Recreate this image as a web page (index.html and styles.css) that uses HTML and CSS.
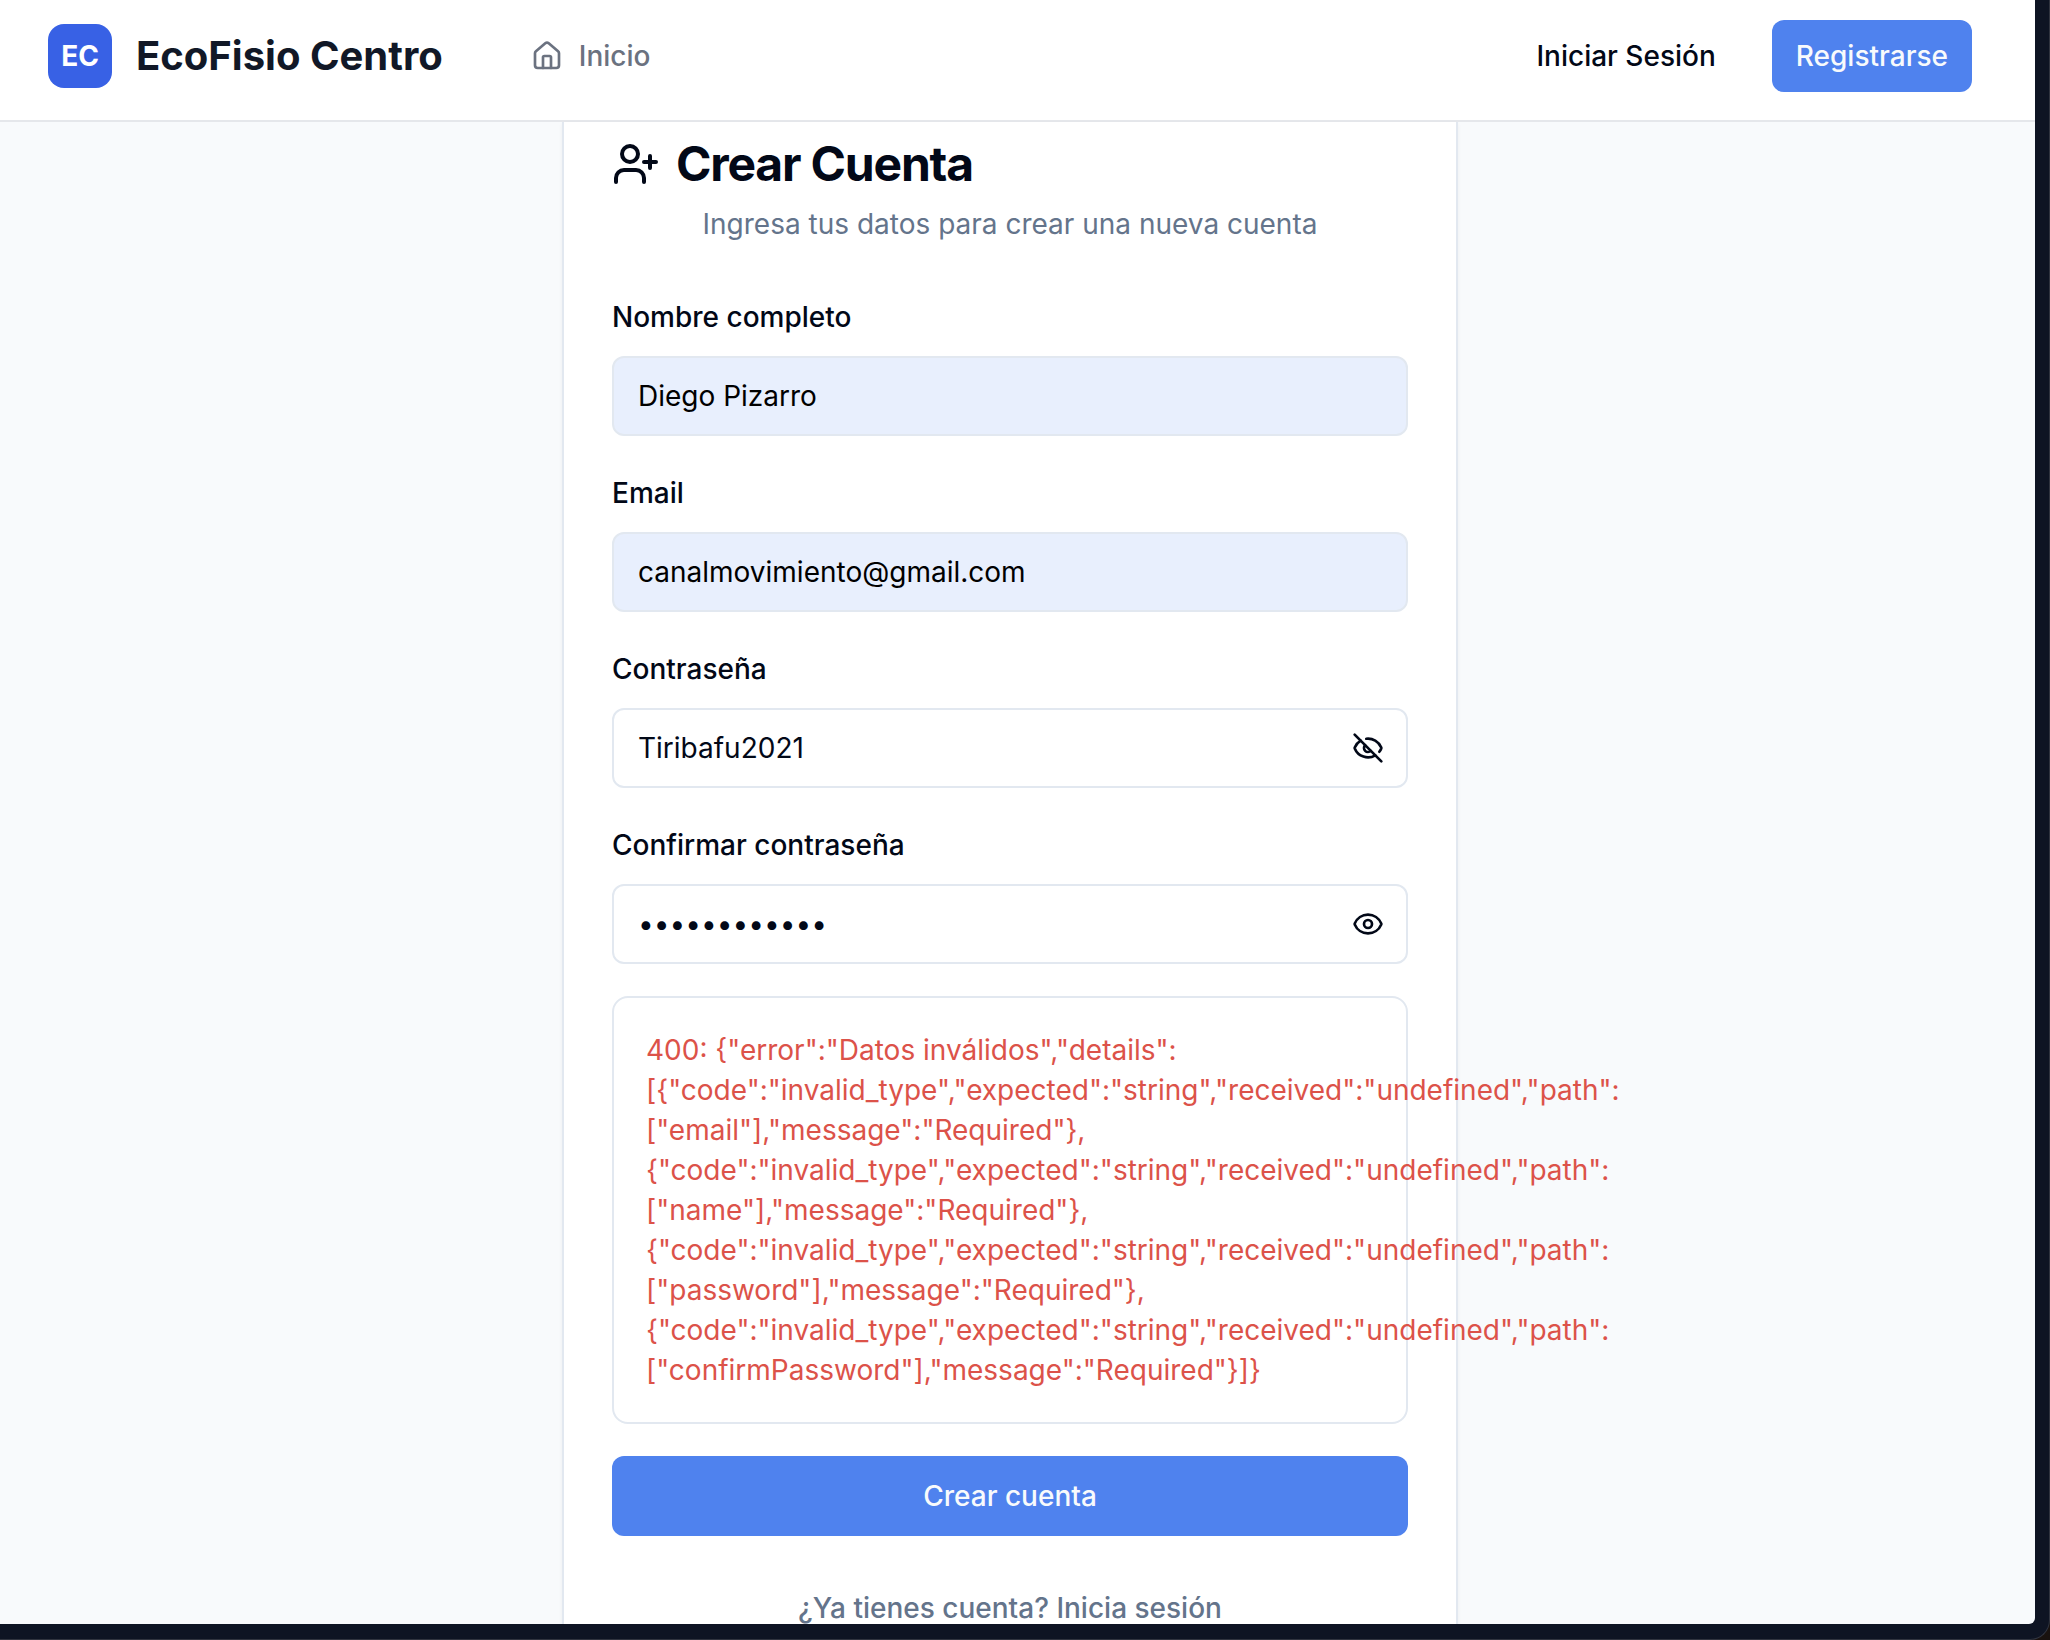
FILE: index.html
```html
<!DOCTYPE html>
<html lang="es">
<head>
<meta charset="utf-8">
<title>EcoFisio Centro</title>
<link rel="stylesheet" href="styles.css">
</head>
<body>
<div class="window">
<div class="screen">
  <header class="header">
    <div class="logo">EC</div>
    <span class="brand">EcoFisio Centro</span>
    <nav class="nav">
      <a class="nav-link">
        <svg class="icon" viewBox="0 0 24 24"><path d="M15 21v-8a1 1 0 0 0-1-1h-4a1 1 0 0 0-1 1v8"/><path d="M3 10a2 2 0 0 1 .709-1.528l7-5.999a2 2 0 0 1 2.582 0l7 5.999A2 2 0 0 1 21 10v9a2 2 0 0 1-2 2H5a2 2 0 0 1-2-2z"/></svg>
        <span>Inicio</span>
      </a>
    </nav>
    <a class="login">Iniciar Sesión</a>
    <button class="btn register">Registrarse</button>
  </header>
  <main class="main">
    <section class="card">
      <h1 class="title">
        <svg class="icon icon-lg" viewBox="0 0 24 24"><path d="M16 21v-2a4 4 0 0 0-4-4H6a4 4 0 0 0-4 4v2"/><circle cx="9" cy="7" r="4"/><path d="M19 8v6M22 11h-6"/></svg>
        <span>Crear Cuenta</span>
      </h1>
      <p class="subtitle">Ingresa tus datos para crear una nueva cuenta</p>
      <form class="form">
        <div class="field">
          <label class="label" for="name">Nombre completo</label>
          <div class="control filled"><input class="input" id="name" type="text" value="Diego Pizarro"></div>
        </div>
        <div class="field">
          <label class="label" for="email">Email</label>
          <div class="control filled"><input class="input" id="email" type="text" value="canalmovimiento@gmail.com"></div>
        </div>
        <div class="field">
          <label class="label" for="password">Contraseña</label>
          <div class="control">
            <input class="input" id="password" type="text" value="Tiribafu2021">
            <svg class="icon" viewBox="0 0 24 24"><path d="M10.733 5.076a10.744 10.744 0 0 1 11.205 6.575 1 1 0 0 1 0 .696 10.747 10.747 0 0 1-1.444 2.49"/><path d="M14.084 14.158a3 3 0 0 1-4.242-4.242"/><path d="M17.479 17.499a10.75 10.75 0 0 1-15.417-5.151 1 1 0 0 1 0-.696 10.75 10.75 0 0 1 4.446-5.143"/><path d="m2 2 20 20"/></svg>
          </div>
        </div>
        <div class="field">
          <label class="label" for="confirm">Confirmar contraseña</label>
          <div class="control">
            <input class="input" id="confirm" type="password" value="Tiribafu2021">
            <svg class="icon" viewBox="0 0 24 24"><path d="M2.062 12.348a1 1 0 0 1 0-.696 10.75 10.75 0 0 1 19.876 0 1 1 0 0 1 0 .696 10.75 10.75 0 0 1-19.876 0"/><circle cx="12" cy="12" r="3"/></svg>
          </div>
        </div>
        <div class="alert">400: {"error":"Datos inválidos","details":<br>[{"code":"invalid_type","expected":"string","received":"undefined","path":<br>["email"],"message":"Required"},<br>{"code":"invalid_type","expected":"string","received":"undefined","path":<br>["name"],"message":"Required"},<br>{"code":"invalid_type","expected":"string","received":"undefined","path":<br>["password"],"message":"Required"},<br>{"code":"invalid_type","expected":"string","received":"undefined","path":<br>["confirmPassword"],"message":"Required"}]}</div>
        <button class="btn submit" type="button">Crear cuenta</button>
        <a class="switch">¿Ya tienes cuenta? Inicia sesión</a>
      </form>
    </section>
  </main>
</div>
</div>
</body>
</html>
```
FILE: styles.css
```css
* { box-sizing: border-box; }

html { background: #19120f; }

body {
  margin: 0;
  height: 1640px;
  overflow: hidden;
  font-family: Inter, "Liberation Sans", sans-serif;
  font-size: 28px;
  line-height: 40px;
  font-variation-settings: "opsz" 14;
  color: #020817;
}

.window {
  width: 2050px;
  height: 1640px;
  padding: 0 13px 14px 0;
  background: #0e1423;
  border: solid #30343f;
  border-width: 0 1px 1px 0;
  border-bottom-right-radius: 20px;
}

.screen {
  width: 2035px;
  height: 1624px;
  overflow: hidden;
  display: flex;
  flex-direction: column;
  background: #f8fafc;
  border-bottom-right-radius: 6px;
}

.header {
  flex: none;
  height: 122px;
  padding: 0 63px 8px 48px;
  display: flex;
  align-items: center;
  background: #fff;
  border-bottom: 2px solid #e5e7eb;
}

.logo {
  width: 64px;
  height: 64px;
  display: grid;
  place-items: center;
  border-radius: 16px;
  background: #3861e5;
  color: #fff;
  font-weight: 700;
}

.brand {
  margin-left: 24px;
  font-size: 40px;
  line-height: 56px;
  font-weight: 700;
  color: #111827;
}

.nav { flex: 1; margin-left: 88px; }

.nav-link {
  display: flex;
  align-items: center;
  gap: 16px;
  font-weight: 500;
  color: #6b7280;
}

.login { margin-right: 56px; font-weight: 500; }

.icon {
  flex: none;
  width: 32px;
  height: 32px;
  fill: none;
  stroke: currentColor;
  stroke-width: 2;
  stroke-linecap: round;
  stroke-linejoin: round;
}

.icon-lg { width: 48px; height: 48px; }

.btn {
  border: 0;
  border-radius: 12px;
  background: #4f82ee;
  color: #f8fafc;
  font: inherit;
  font-variation-settings: inherit;
  font-weight: 500;
}

.register { height: 72px; padding: 0 24px; }

.main { flex: 1; display: flex; padding-left: 562px; }

.card {
  width: 896px;
  padding: 10px 48px 0;
  background: #fff;
  border: solid #e2e8f0;
  border-width: 0 2px;
  box-shadow: 0 2px 4px rgba(0, 0, 0, .05);
}

.title {
  margin: 0 0 8px;
  height: 64px;
  display: flex;
  align-items: center;
  gap: 16px;
  font-size: 48px;
  line-height: 64px;
  font-weight: 700;
  letter-spacing: -0.025em;
}

.subtitle { margin: 0 0 48px; text-align: center; color: #64748b; }

.form { display: flex; flex-direction: column; gap: 32px; }

.field { display: flex; flex-direction: column; gap: 16px; }

.label { height: 48px; line-height: 50px; font-weight: 500; }

.control {
  height: 80px;
  padding: 0 22px 0 24px;
  display: flex;
  align-items: center;
  border: 2px solid #e2e8f0;
  border-radius: 12px;
  background: #fff;
}

.filled { background: #e8effd; }

.input {
  flex: 1;
  min-width: 0;
  padding: 0;
  border: 0;
  outline: 0;
  background: none;
  color: inherit;
  font: inherit;
  font-variation-settings: inherit;
}

.filled .input { color: #000; }

.alert {
  padding: 32px;
  border: 2px solid #e2e8f0;
  border-radius: 16px;
  white-space: nowrap;
  color: #dc5249;
}

.submit { height: 80px; }

.switch {
  line-height: 80px;
  text-align: center;
  font-weight: 500;
  color: #64748b;
}
```
